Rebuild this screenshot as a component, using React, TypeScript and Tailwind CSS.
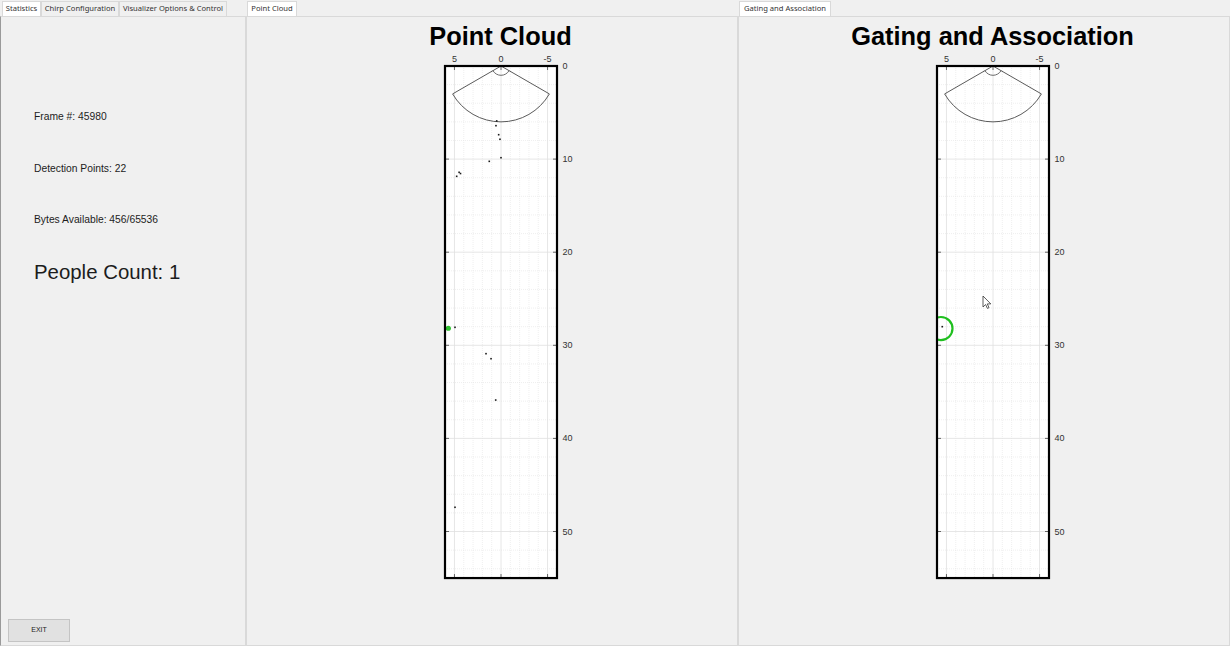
const S = 9.31;
const CX = 80;
const TOP = 14;
const L = 24;
const R = 136;
const B = TOP + 55 * S;
const px = (x: number) => CX - x * S;
const py = (y: number) => TOP + y * S;

type Pt = [number, number];

const cloudPoints: Pt[] = [
  [0.46, 5.9], [0.54, 6.41], [0.25, 7.38], [0.11, 7.87], [0, 9.85],
  [1.26, 10.24], [4.5, 11.42], [4.35, 11.55], [4.76, 11.85], [4.94, 28.07],
  [1.61, 30.9], [1.07, 31.44], [0.57, 35.88], [4.94, 47.4],
];

interface PlotProps {
  id: string;
  title: string;
  points: Pt[];
  greenDot?: Pt;
  track?: { c: Pt; r: number };
  cursor?: boolean;
}

const Plot = ({ id, title, points, greenDot, track, cursor }: PlotProps) => {
  const minorX: number[] = [];
  for (let x = -6; x <= 6; x++) if (x % 5 !== 0) minorX.push(x);
  const minorY: number[] = [];
  for (let y = 2; y < 55; y += 2) if (y % 10 !== 0) minorY.push(y);
  const majorX = [5, 0, -5];
  const majorY = [0, 10, 20, 30, 40, 50];

  const sx = 6 * Math.sin(Math.PI / 3) * S;
  const sy = 6 * Math.cos(Math.PI / 3) * S;
  const r6 = 6 * S;
  const r1 = S;

  return (
    <div className="ml-[27px] flex w-[170px] flex-col items-center">
      <div className="mt-[4px] h-[30px] whitespace-nowrap text-[25.4px] font-bold leading-[30px] text-black [font-family:'Liberation_Sans',Arial,sans-serif] -translate-x-[5px]">
        {title}
      </div>
      <svg width="170" height="535" viewBox="0 0 170 535" className="mt-[1px] block">
        <defs>
          <clipPath id={id}>
            <rect x={L} y={TOP} width={R - L} height={B - TOP} />
          </clipPath>
        </defs>
        <rect x={L} y={TOP} width={R - L} height={B - TOP} fill="#ffffff" />
        <g clipPath={`url(#${id})`}>
          {minorX.map((x) => (
            <line key={`mx${x}`} x1={px(x)} x2={px(x)} y1={TOP} y2={B} stroke="#e4e4e4" strokeWidth="0.6" strokeDasharray="1 1" />
          ))}
          {minorY.map((y) => (
            <line key={`my${y}`} x1={L} x2={R} y1={py(y)} y2={py(y)} stroke="#e4e4e4" strokeWidth="0.6" strokeDasharray="1 1" />
          ))}
          {majorX.map((x) => (
            <line key={`gx${x}`} x1={px(x)} x2={px(x)} y1={TOP} y2={B} stroke="#e0e0e0" strokeWidth="0.8" />
          ))}
          {majorY.map((y) => (
            <line key={`gy${y}`} x1={L} x2={R} y1={py(y)} y2={py(y)} stroke="#e0e0e0" strokeWidth="0.8" />
          ))}
          <path
            d={`M${CX} ${TOP} L${CX - sx} ${TOP + sy} A${r6} ${r6} 0 0 0 ${CX + sx} ${TOP + sy} Z`}
            fill="none"
            stroke="#5a5a5a"
            strokeWidth="1"
          />
          <path
            d={`M${CX - r1 * 0.866} ${TOP + r1 * 0.5} A${r1} ${r1} 0 0 0 ${CX + r1 * 0.866} ${TOP + r1 * 0.5}`}
            fill="none"
            stroke="#5a5a5a"
            strokeWidth="0.9"
          />
          {points.map(([x, y], i) => (
            <rect key={i} x={px(x) - 0.8} y={py(y) - 0.8} width="1.6" height="1.6" fill="#1a1a1a" />
          ))}
          {greenDot && <circle cx={px(greenDot[0])} cy={py(greenDot[1])} r="2.6" fill="#2fc12f" />}
          {track && (
            <>
              <circle cx={px(track.c[0])} cy={py(track.c[1])} r={track.r * S} fill="none" stroke="#1fbf1f" strokeWidth="2.2" />
              <rect x={px(track.c[0] - 0.14) - 0.8} y={py(track.c[1] - 0.2) - 0.8} width="1.6" height="1.6" fill="#1a1a1a" />
            </>
          )}
        </g>
        {majorY.map((y) => (
          <g key={`ty${y}`}>
            <line x1={L} x2={L + 4} y1={py(y)} y2={py(y)} stroke="#444" strokeWidth="0.8" />
            <line x1={R - 4} x2={R} y1={py(y)} y2={py(y)} stroke="#444" strokeWidth="0.8" />
            <text x={R + 5.5} y={py(y) + 3} fontSize="9" fill="#333" fontFamily="'Liberation Sans', Arial, sans-serif">
              {y}
            </text>
          </g>
        ))}
        {majorX.map((x) => (
          <g key={`tx${x}`}>
            <line x1={px(x)} x2={px(x)} y1={TOP} y2={TOP + 4} stroke="#444" strokeWidth="0.8" />
            <line x1={px(x)} x2={px(x)} y1={B - 4} y2={B} stroke="#444" strokeWidth="0.8" />
            <text x={px(x)} y={TOP - 4} fontSize="9" fill="#333" textAnchor="middle" fontFamily="'Liberation Sans', Arial, sans-serif">
              {x}
            </text>
          </g>
        ))}
        <rect x={L} y={TOP} width={R - L} height={B - TOP} fill="none" stroke="#000" strokeWidth="2.2" />
        {cursor && (
          <path
            transform="translate(70 244)"
            d="M0 0 L0 11 L2.6 8.5 L4.4 12.4 L6 11.7 L4.3 7.9 L7.8 7.9 Z"
            fill="#ffffff"
            stroke="#333"
            strokeWidth="0.8"
            strokeLinejoin="round"
          />
        )}
      </svg>
    </div>
  );
};

const Tab = ({ label, width, active }: { label: string; width: string; active?: boolean }) => (
  <div
    className={`${width} ${active ? "bg-white" : "bg-[#f0f0f0]"} flex h-[15px] items-center justify-center overflow-hidden whitespace-nowrap border border-b-0 border-[#d9d9d9] text-[7.6px] text-[#333] [font-family:'Noto_Sans',sans-serif]`}
  >
    {label}
  </div>
);

export default function App() {
  return (
    <div className="flex h-[646px] w-[1230px] overflow-hidden bg-[#f0f0f0] [font-family:'Liberation_Sans',Arial,sans-serif]">
      <div className="flex w-[246px] flex-col">
        <div className="flex h-[16px] items-end pl-[2px]">
          <Tab label="Statistics" width="w-[39px]" active />
          <Tab label="Chirp Configuration" width="w-[78px]" />
          <Tab label="Visualizer Options & Control" width="w-[108px]" />
        </div>
        <div className="flex flex-1 flex-col border border-[#d9d9d9] border-l-[#9a9a9a] bg-[#f0f0f0]">
          <div className="pl-[33px] text-[#1c1c1c]">
            <div className="mt-[94px] h-[12px] text-[10.3px] leading-[12px]">Frame #: 45980</div>
            <div className="mt-[40px] h-[12px] text-[10.3px] leading-[12px]">Detection Points: 22</div>
            <div className="mt-[39px] h-[12px] text-[10.3px] leading-[12px]">Bytes Available: 456/65536</div>
            <div className="mt-[34px] h-[24px] text-[20.4px] leading-[24px]">People Count: 1</div>
          </div>
          <button className="ml-[7px] mt-auto mb-[3px] h-[23px] w-[62px] border border-[#c4c4c4] bg-[#e1e1e1] text-[7px] text-[#222]">
            EXIT
          </button>
        </div>
      </div>
      <div className="flex w-[492px] flex-col">
        <div className="flex h-[16px] items-end pl-[1px]">
          <Tab label="Point Cloud" width="w-[50px]" active />
        </div>
        <div className="flex flex-1 flex-col items-center border border-[#d9d9d9] bg-[#f0f0f0]">
          <Plot id="pc" title="Point Cloud" points={cloudPoints} greenDot={[5.66, 28.17]} />
        </div>
      </div>
      <div className="flex w-[492px] flex-col">
        <div className="flex h-[16px] items-end pl-[1px]">
          <Tab label="Gating and Association" width="w-[92px]" active />
        </div>
        <div className="flex flex-1 flex-col items-center border border-[#d9d9d9] bg-[#f0f0f0]">
          <Plot id="ga" title="Gating and Association" points={[]} track={{ c: [5.59, 28.2], r: 1.24 }} cursor />
        </div>
      </div>
    </div>
  );
}
